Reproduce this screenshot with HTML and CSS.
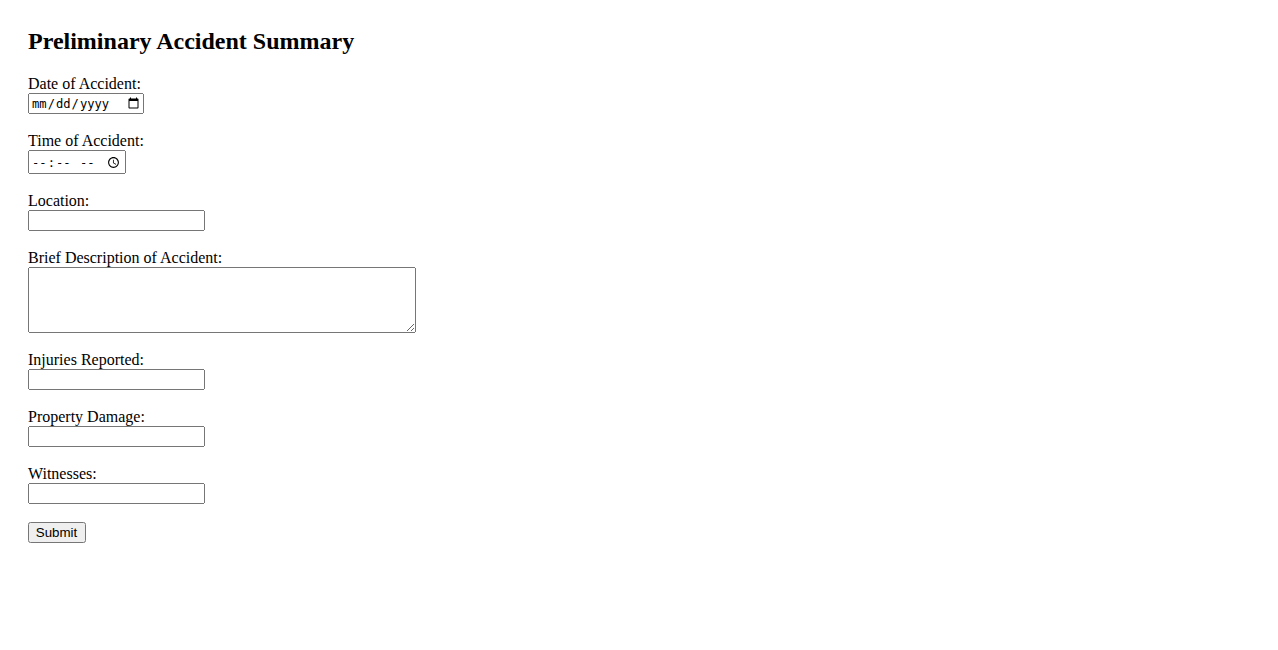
FILE: index.html
```html
<!DOCTYPE html>
<html lang="en">
<head>
    <meta charset="UTF-8">
    <title>Preliminary Accident Summary</title>
    <link rel="stylesheet" href="styles.css">
</head>
<body>
    <h2>Preliminary Accident Summary</h2>
    <form>
        <label for="date">Date of Accident:</label><br>
        <input type="date" class="date-input" id="date" name="date"><br><br>

        <label for="time">Time of Accident:</label><br>
        <input type="time" class="time-input" id="time" name="time"><br><br>

        <label for="location">Location:</label><br>
        <input type="text" class="text-input" id="location" name="location"><br><br>

        <label for="description">Brief Description of Accident:</label><br>
        <textarea class="description" id="description" name="description" rows="4" cols="50"></textarea><br><br>

        <label for="injuries">Injuries Reported:</label><br>
        <input type="text" class="text-input" id="injuries" name="injuries"><br><br>

        <label for="damage">Property Damage:</label><br>
        <input type="text" class="text-input" id="damage" name="damage"><br><br>

        <label for="witnesses">Witnesses:</label><br>
        <input type="text" class="text-input" id="witnesses" name="witnesses"><br><br>

        <input type="submit" class="submit-btn" value="Submit">
    </form>
</body>
</html>
```

FILE: styles.css
```css
body {
    margin: 20px 28px;
    padding-top: 8px;
    font-family: "Liberation Serif", "Times New Roman", serif;
}

h2 {
    margin: 0 0 20px;
}

.date-input,
.time-input {
    box-sizing: border-box;
    font-family: "DejaVu Sans Mono", monospace;
    font-size: 12.15px;
}

.date-input {
    width: 116px;
    height: 21px;
}

.time-input {
    width: 98px;
    height: 24px;
    padding: 2px 1px 0 1px;
}

.date-input::-webkit-calendar-picker-indicator,
.time-input::-webkit-calendar-picker-indicator {
    width: 13.33px;
    height: 13.33px;
}

.text-input {
    box-sizing: border-box;
    width: 177px;
}

.description {
    box-sizing: border-box;
    width: 388px;
    height: 66px;
    vertical-align: top;
}

.submit-btn {
    width: 58px;
    padding-left: 5px;
}
```
